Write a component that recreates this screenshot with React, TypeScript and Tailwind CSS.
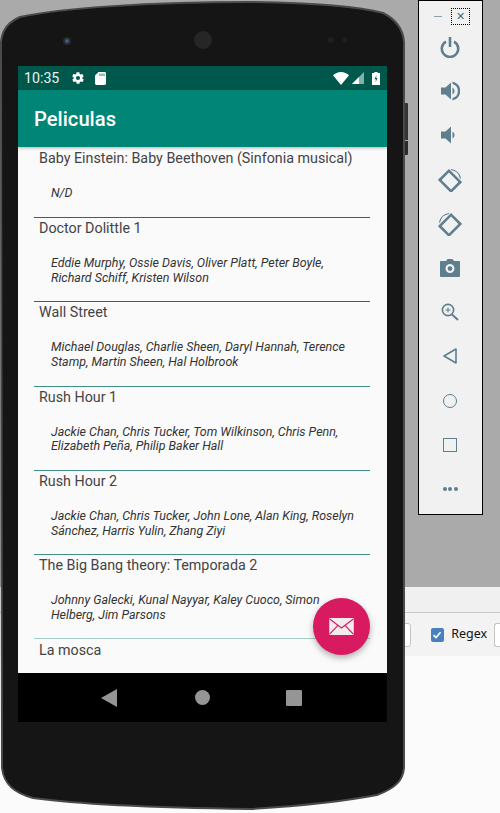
const MOVIES = [
  { title: 'Doctor Dolittle 1', cast: ['Eddie Murphy, Ossie Davis, Oliver Platt, Peter Boyle,', 'Richard Schiff, Kristen Wilson'], line: 'border-[#2c6a60]' },
  { title: 'Wall Street', cast: ['Michael Douglas, Charlie Sheen, Daryl Hannah, Terence', 'Stamp, Martin Sheen, Hal Holbrook'], line: 'border-[#3f8f84]' },
  { title: 'Rush Hour 1', cast: ['Jackie Chan, Chris Tucker, Tom Wilkinson, Chris Penn,', 'Elizabeth Peña, Philip Baker Hall'], line: 'border-[#3f8f84]' },
  { title: 'Rush Hour 2', cast: ['Jackie Chan, Chris Tucker, John Lone, Alan King, Roselyn', 'Sánchez, Harris Yulin, Zhang Ziyi'], line: 'border-[#3f8f84]' },
  { title: 'The Big Bang theory: Temporada 2', cast: ['Johnny Galecki, Kunal Nayyar, Kaley Cuoco, Simon', 'Helberg, Jim Parsons'], line: 'border-[#a3cdc6]' },
];

function ToolButton({ children }: { children: React.ReactNode }) {
  return <div className="flex h-[44.2px] items-center justify-center pr-[1px] text-[#5f7f8f]">{children}</div>;
}

function Rotate({ flip }: { flip?: boolean }) {
  return (
    <svg width="24" height="24" viewBox="0 0 24 24" fill="none" stroke="currentColor">
      <g transform={flip ? 'translate(24 0) scale(-1 1)' : undefined}>
        <rect x="5.5" y="5" width="13" height="16" transform="rotate(-45 12 13)" strokeWidth="2.6" />
        <path d="M13 1.5a11 11 0 0 1 9.5 9" strokeWidth="1.2" />
      </g>
    </svg>
  );
}

function Speaker({ loud }: { loud?: boolean }) {
  return (
    <svg width="20" height="22" viewBox="0 0 20 22" fill="currentColor">
      <path d="M1 7.5h4.5L11 2.5v17l-5.5-5H1z" />
      {loud ? (
        <>
          <path d="M12.5 7.5a4 4 0 0 1 0 7z" />
          <path d="M12.5 1.5a9.7 9.7 0 0 1 0 19v-2.4a7.4 7.4 0 0 0 0-14.2z" />
        </>
      ) : (
        <path d="M12.5 7.5a4 4 0 0 1 0 7z" />
      )}
    </svg>
  );
}

export default function App() {
  return (
    <div className="relative h-[813px] w-[500px] overflow-hidden bg-[#fbfbfb] font-['Roboto',sans-serif]">
      {/* fondo del escritorio */}
      <div className="h-[587px] bg-[#aaaaaa]" />
      <div className="h-[26px] border-b border-[#c8c8c8] bg-[#f0f0f0]" />
      <div className="flex h-[43px] items-center bg-[#f3f3f3]">
        <div className="ml-[400px] h-[24px] w-[11px] rounded-r-[3px] border border-[#c4c4c4] bg-white" />
        <div className="ml-[20px] flex h-[14px] w-[14px] items-center justify-center rounded-[2px] bg-[#4a7fc0]">
          <svg width="10" height="10" viewBox="0 0 10 10" fill="none" stroke="white" strokeWidth="1.6">
            <path d="M1.5 5.2 4 7.6 8.6 2.2" />
          </svg>
        </div>
        <span className="ml-[7px] font-['Noto_Sans',sans-serif] text-[12.5px] text-[#111]">Regex</span>
        <div className="ml-[7px] h-[24px] w-[6px] rounded-l-[3px] border border-r-0 border-[#c4c4c4] bg-white" />
      </div>

      {/* carcasa del telefono */}
      <svg className="absolute left-0 top-0" width="410" height="813" viewBox="0 0 410 813">
        <path
          d="M1 42C2 30 8 22 20 17 60 8 150 2 250 2 310 3 360 7 383 13 395 19 403 28 404 42V768C403 780 396 788 377 795 340 802 300 806 250 809 180 808 90 806 33 798 15 793 4 785 2 768Z"
          fill="#151515"
          stroke="#4a4a4a"
          strokeWidth="2"
        />
        <circle cx="67" cy="41" r="4" fill="#2a2a2a" />
        <circle cx="67" cy="41" r="2" fill="#3d5a8c" />
        <circle cx="203" cy="40" r="9" fill="#262626" />
        <circle cx="331" cy="40" r="3" fill="#1f1f1f" />
        <circle cx="345" cy="40" r="2.5" fill="#1f1f1f" />
      </svg>
      <div className="absolute left-[405px] top-[103px] h-[37px] w-[3px] rounded-tr-[1px] bg-[#333]" />
      <div className="absolute left-[405px] top-[141px] h-[14px] w-[3px] rounded-br-[1px] bg-[#2a2a2a]" />

      {/* pantalla */}
      <div className="absolute left-[18px] top-[66px] flex h-[656px] w-[369px] flex-col">
        <div className="flex h-[24px] shrink-0 items-center bg-[#00574b] pl-[6px] pr-[7px] text-white">
          <span className="text-[14.2px] leading-none text-[#e8f2f0]">10:35</span>
          <svg className="ml-[11.5px]" width="14" height="14" viewBox="0 0 24 24" fill="white">
            <path d="M19.4 13c0-.3.1-.6.1-1s0-.7-.1-1l2.1-1.6c.2-.2.2-.4.1-.6l-2-3.5c-.1-.2-.4-.3-.6-.2l-2.5 1c-.5-.4-1.1-.7-1.7-1l-.4-2.6c0-.3-.2-.5-.5-.5h-4c-.3 0-.5.2-.5.4l-.4 2.7c-.6.2-1.1.6-1.7 1l-2.5-1c-.2-.1-.5 0-.6.2l-2 3.5c-.1.2-.1.5.1.6L4.6 11c0 .3-.1.7-.1 1s0 .7.1 1l-2.1 1.6c-.2.2-.2.4-.1.6l2 3.5c.1.2.4.3.6.2l2.5-1c.5.4 1.1.7 1.7 1l.4 2.6c0 .2.2.4.5.4h4c.3 0 .5-.2.5-.4l.4-2.6c.6-.3 1.2-.6 1.7-1l2.5 1c.2.1.5 0 .6-.2l2-3.5c.1-.2.1-.5-.1-.6L19.4 13zM12 15.5a3.5 3.5 0 1 1 0-7 3.5 3.5 0 0 1 0 7z" />
          </svg>
          <svg className="ml-[10.5px]" width="11" height="13" viewBox="0 0 11 13" fill="white">
            <path d="M3.5 0H9.6c.8 0 1.4.6 1.4 1.4v10.2c0 .8-.6 1.4-1.4 1.4H1.4C.6 13 0 12.4 0 11.6V3.5L3.5 0z" />
            <path d="M5 1.5v2.5M7 1.5v2.5M9 1.5v2.5" stroke="#00574b" strokeWidth=".8" />
          </svg>
          <div className="ml-auto flex items-center">
            <svg width="16" height="13" viewBox="0 0 16 13" fill="white">
              <path d="M0 3.2C2 1.3 4.8 0 8 0s6 1.3 8 3.2L8 13 0 3.2z" />
            </svg>
            <svg className="ml-[3px]" width="12" height="12" viewBox="0 0 12 12">
              <path d="M12 0v12H0z" fill="#7fb3aa" />
              <path d="M7 5v7H0z" fill="white" />
            </svg>
            <svg className="ml-[8px]" width="8" height="13" viewBox="0 0 8 13" fill="white">
              <path d="M2.4 0h3.2v1H8v12H0V1h2.4z" />
              <path d="M4.5 3 2.6 7.2H4L3.5 10.5 5.4 6H4.1z" fill="#00574b" />
            </svg>
          </div>
        </div>

        <div className="z-10 flex h-[57px] shrink-0 items-center bg-[#008577] pl-[16px] pt-[1px] shadow-[0_1px_3px_rgba(0,0,0,0.3)]">
          <h1 className="text-[20.2px] font-medium text-white">Peliculas</h1>
        </div>

        <div className="relative min-h-0 flex-1 overflow-hidden bg-[#fafafa] pl-[16px] pr-[17px]">
          <div className="h-[71px] border-b border-[#2c6a60]">
            <p className="pl-[5px] pt-[3px] text-[14.3px] leading-[17px] text-[#444]">Baby Einstein: Baby Beethoven (Sinfonia musical)</p>
            <p className="pl-[17px] pt-[18px] text-[12.45px] italic leading-[15px] text-[#333]">N/D</p>
          </div>
          {MOVIES.map(movie => (
            <div key={movie.title} className={`h-[84.3px] border-b ${movie.line}`}>
              <p className="pl-[5px] pt-[2px] text-[14.3px] leading-[17px] text-[#444]">{movie.title}</p>
              <div className="pl-[17px] pt-[19px] text-[12.45px] italic leading-[14.7px] text-[#333]">
                {movie.cast.map(line => <p key={line} className="whitespace-nowrap">{line}</p>)}
              </div>
            </div>
          ))}
          <p className="pl-[5px] pt-[2.5px] text-[14.3px] leading-[17px] text-[#444]">La mosca</p>

          <div className="absolute right-[17px] top-[451px] flex h-[57px] w-[57px] items-center justify-center rounded-full bg-[#d81b60] shadow-[0_3px_6px_rgba(0,0,0,0.3)]">
            <svg width="25" height="17" viewBox="0 0 26 18">
              <rect width="26" height="18" rx="1" fill="#f3ecee" />
              <path d="M.5 1 13 10.5 25.5 1M.5 17 9 8M25.5 17 17 8" fill="none" stroke="#d81b60" strokeWidth="1.2" />
            </svg>
          </div>
        </div>

        <div className="flex h-[49px] shrink-0 items-center bg-black">
          <svg className="ml-[83px]" width="16" height="18" viewBox="0 0 16 18" fill="#959595"><path d="M16 0v18L0 9z" /></svg>
          <div className="ml-[78px] h-[15px] w-[15px] rounded-full bg-[#959595]" />
          <div className="ml-[76px] h-[16px] w-[16px] rounded-[1px] bg-[#959595]" />
        </div>
      </div>

      {/* barra de herramientas del emulador */}
      <div className="absolute left-[418px] top-0 flex h-[515px] w-[65px] flex-col border border-black bg-[#f1f1f1] pt-[6px]">
        <div className="flex h-[18px] items-center pl-[15px] text-[#8aa0ab]">
          <div className="h-px w-[8px] bg-current" />
          <div className="ml-[9px] flex h-[17px] w-[19px] items-center justify-center border border-dotted border-black text-[11px] leading-none text-[#4a6a7a]">✕</div>
        </div>
        <div className="flex flex-col">
          <ToolButton>
            <svg width="20" height="21" viewBox="0 0 20 21" fill="none" stroke="currentColor" strokeWidth="2.6">
              <path d="M6 4.6a8.2 8.2 0 1 0 8 0" />
              <path d="M10 0v10" />
            </svg>
          </ToolButton>
          <ToolButton><Speaker loud /></ToolButton>
          <ToolButton><Speaker /></ToolButton>
          <ToolButton><Rotate /></ToolButton>
          <ToolButton><Rotate flip /></ToolButton>
          <ToolButton>
            <svg width="20" height="18" viewBox="0 0 20 18">
              <path fillRule="evenodd" fill="currentColor" d="M1 2h5l1.5-2h5L14 2h5c.6 0 1 .4 1 1v14c0 .6-.4 1-1 1H1c-.6 0-1-.4-1-1V3c0-.6.4-1 1-1zm9 3a4.5 4.5 0 1 0 0 9 4.5 4.5 0 0 0 0-9zm0 2.2a2.4 2.4 0 1 1 0 4.8 2.4 2.4 0 0 1 0-4.8z" />
            </svg>
          </ToolButton>
          <ToolButton>
            <svg width="18" height="18" viewBox="0 0 18 18" fill="none" stroke="currentColor">
              <circle cx="7" cy="7" r="5.6" strokeWidth="1.6" />
              <path d="M10.5 11 17 17" strokeWidth="2" />
              <path d="M7 4.5v5M4.5 7h5" strokeWidth="1" />
            </svg>
          </ToolButton>
          <ToolButton>
            <svg width="14" height="16" viewBox="0 0 14 16" fill="none" stroke="currentColor" strokeWidth="1.6"><path d="M13 1v14L1 8z" strokeLinejoin="round" /></svg>
          </ToolButton>
          <ToolButton><div className="h-[14px] w-[14px] rounded-full border-[1.6px] border-current" /></ToolButton>
          <ToolButton><div className="h-[14px] w-[14px] border-[1.6px] border-current" /></ToolButton>
          <ToolButton>
            <div className="flex gap-[1.5px]">
              <span className="h-[4px] w-[4px] rounded-full bg-current" />
              <span className="h-[4px] w-[4px] rounded-full bg-current" />
              <span className="h-[4px] w-[4px] rounded-full bg-current" />
            </div>
          </ToolButton>
        </div>
      </div>
    </div>
  );
}
